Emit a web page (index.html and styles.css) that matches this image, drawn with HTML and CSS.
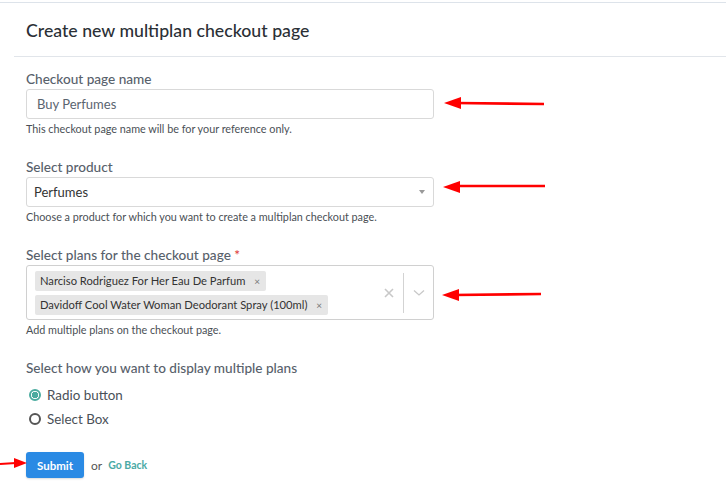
FILE: index.html
```html
<!DOCTYPE html>
<html>
<head>
<meta charset="utf-8">
<link rel="stylesheet" href="styles.css">
</head>
<body>
<div class="page">
  <div class="card">
    <div class="header"><h1 class="title">Create new multiplan checkout page</h1></div>
    <form class="form">
      <div class="field">
        <label class="label">Checkout page name</label>
        <div class="input">Buy Perfumes</div>
        <p class="help">This checkout page name will be for your reference only.</p>
      </div>
      <div class="field">
        <label class="label">Select product</label>
        <div class="input select"><span class="select-value">Perfumes</span><span class="caret"></span></div>
        <p class="help">Choose a product for which you want to create a multiplan checkout page.</p>
      </div>
      <div class="field">
        <label class="label">Select plans for the checkout page <span class="req">*</span></label>
        <div class="multi">
          <div class="tags">
            <span class="tag">Narciso Rodriguez For Her Eau De Parfum <span class="tag-x">×</span></span>
            <span class="tag">Davidoff Cool Water Woman Deodorant Spray (100ml) <span class="tag-x">×</span></span>
          </div>
          <div class="indicators">
            <svg class="clear" width="10" height="10" viewBox="0 0 10 10"><path d="M1 1L9 9M9 1L1 9" stroke="#c8c8c8" stroke-width="1.6"/></svg>
            <span class="sep"></span>
            <svg class="chev" width="12" height="8" viewBox="0 0 12 8"><path d="M1 1.5L6 6L11 1.5" fill="none" stroke="#c8c8c8" stroke-width="1.3"/></svg>
          </div>
        </div>
        <p class="help">Add multiple plans on the checkout page.</p>
      </div>
      <div class="field">
        <label class="label">Select how you want to display multiple plans</label>
        <div class="radios">
          <div class="radio-row"><span class="radio on"></span><span>Radio button</span></div>
          <div class="radio-row"><span class="radio"></span><span>Select Box</span></div>
        </div>
      </div>
      <div class="actions">
        <button type="button" class="btn">Submit</button>
        <span class="or">or</span>
        <a class="back">Go Back</a>
      </div>
    </form>
  </div>
  <svg class="arrows" width="726" height="494" viewBox="0 0 726 494">
    <g fill="#f00" stroke="#f00">
      <path d="M455 103 L544 104" stroke-width="2.6" fill="none"/>
      <path d="M444 103 L461 97 L461 109 Z" stroke="none"/>
      <path d="M455 186 L545 186" stroke-width="2.6" fill="none"/>
      <path d="M443 187 L460 181 L460 193 Z" stroke="none"/>
      <path d="M453 295 L541 294" stroke-width="2.6" fill="none"/>
      <path d="M442 295 L459 289 L459 301 Z" stroke="none"/>
      <path d="M0 464 L16 463" stroke-width="2" fill="none"/>
      <path d="M27 463 L14 458 L14 468 Z" stroke="none"/>
    </g>
  </svg>
</div>
</body>
</html>
```
FILE: styles.css
```css
* { box-sizing: border-box; }
html, body { margin: 0; padding: 0; background: #fff; }
body { font-family: Lato, "Open Sans", sans-serif; color: #333; }
.page { position: relative; width: 726px; height: 494px; padding-top: 2px; overflow: hidden; }
.card { border-top: 1px solid #dde3ea; }
.header { margin-left: 14px; padding-left: 12px; height: 54px; border-bottom: 1px solid #e1e5ea; display: flex; align-items: center; }
.title { margin: 0; font-size: 17.7px; font-weight: 500; color: #2b3036; padding-top: 1px; }
.form { padding: 14px 0 0 26px; }
.field { width: 408px; margin-bottom: 23px; }
.label { display: block; font-size: 13.6px; line-height: 16px; color: #58616b; margin-bottom: 2px; font-weight: 500; }
.req { color: #d33; }
.input { height: 30px; border: 1px solid #d9d9d9; border-radius: 3px; padding: 0 10px; display: flex; align-items: center; font-size: 13px; color: #5a6470; }
.select { padding: 0 8px 0 7px; color: #333; justify-content: space-between; }
.caret { width: 0; height: 0; border-left: 3px solid transparent; border-right: 3px solid transparent; border-top: 4px solid #999; }
.help { margin: 3px 0 0; font-size: 10.8px; line-height: 14px; color: #4a4f55; white-space: nowrap; }
.multi { height: 55px; border: 1px solid #d0d0d0; border-radius: 3px; display: flex; justify-content: space-between; align-items: center; padding: 0 0 0 8px; }
.tags { display: flex; flex-direction: column; align-items: flex-start; gap: 4px; }
.tag { background: #e6e6e6; border-radius: 2px; height: 20px; line-height: 20px; font-size: 11.2px; color: #333; padding: 0 6px 0 5px; }
.tag-x { color: #777; font-size: 10px; margin-left: 6px; }
.indicators { display: flex; align-items: center; height: 100%; }
.clear { margin-right: 9px; }
.sep { width: 1px; height: 40px; background: #d3d3d3; }
.chev { margin: 0 8px 0 9px; }
.radios { margin-top: 7px; }
.radio-row { height: 24px; display: flex; align-items: center; font-size: 13.4px; color: #4a5058; padding-left: 3px; }
.radio { width: 12px; height: 12px; border-radius: 50%; border: 2px solid #555; margin-right: 6px; }
.radio.on { border-color: #4aab9f; background: radial-gradient(circle, #4aab9f 0 3px, #fff 3.5px); }
.actions { display: flex; align-items: center; margin-top: -2px; }
.btn { width: 58px; height: 26px; border: 0; border-radius: 3px; background: #2a8ae4; color: #fff; font-family: inherit; font-size: 11.5px; font-weight: 700; box-shadow: 0 1px 2px rgba(0,0,0,0.15); }
.or { margin-left: 7px; font-size: 12px; color: #555; }
.back { margin-left: 6px; font-size: 10.5px; font-weight: 700; color: #4aaaa5; }
.arrows { position: absolute; left: 0; top: 0; pointer-events: none; }
```
